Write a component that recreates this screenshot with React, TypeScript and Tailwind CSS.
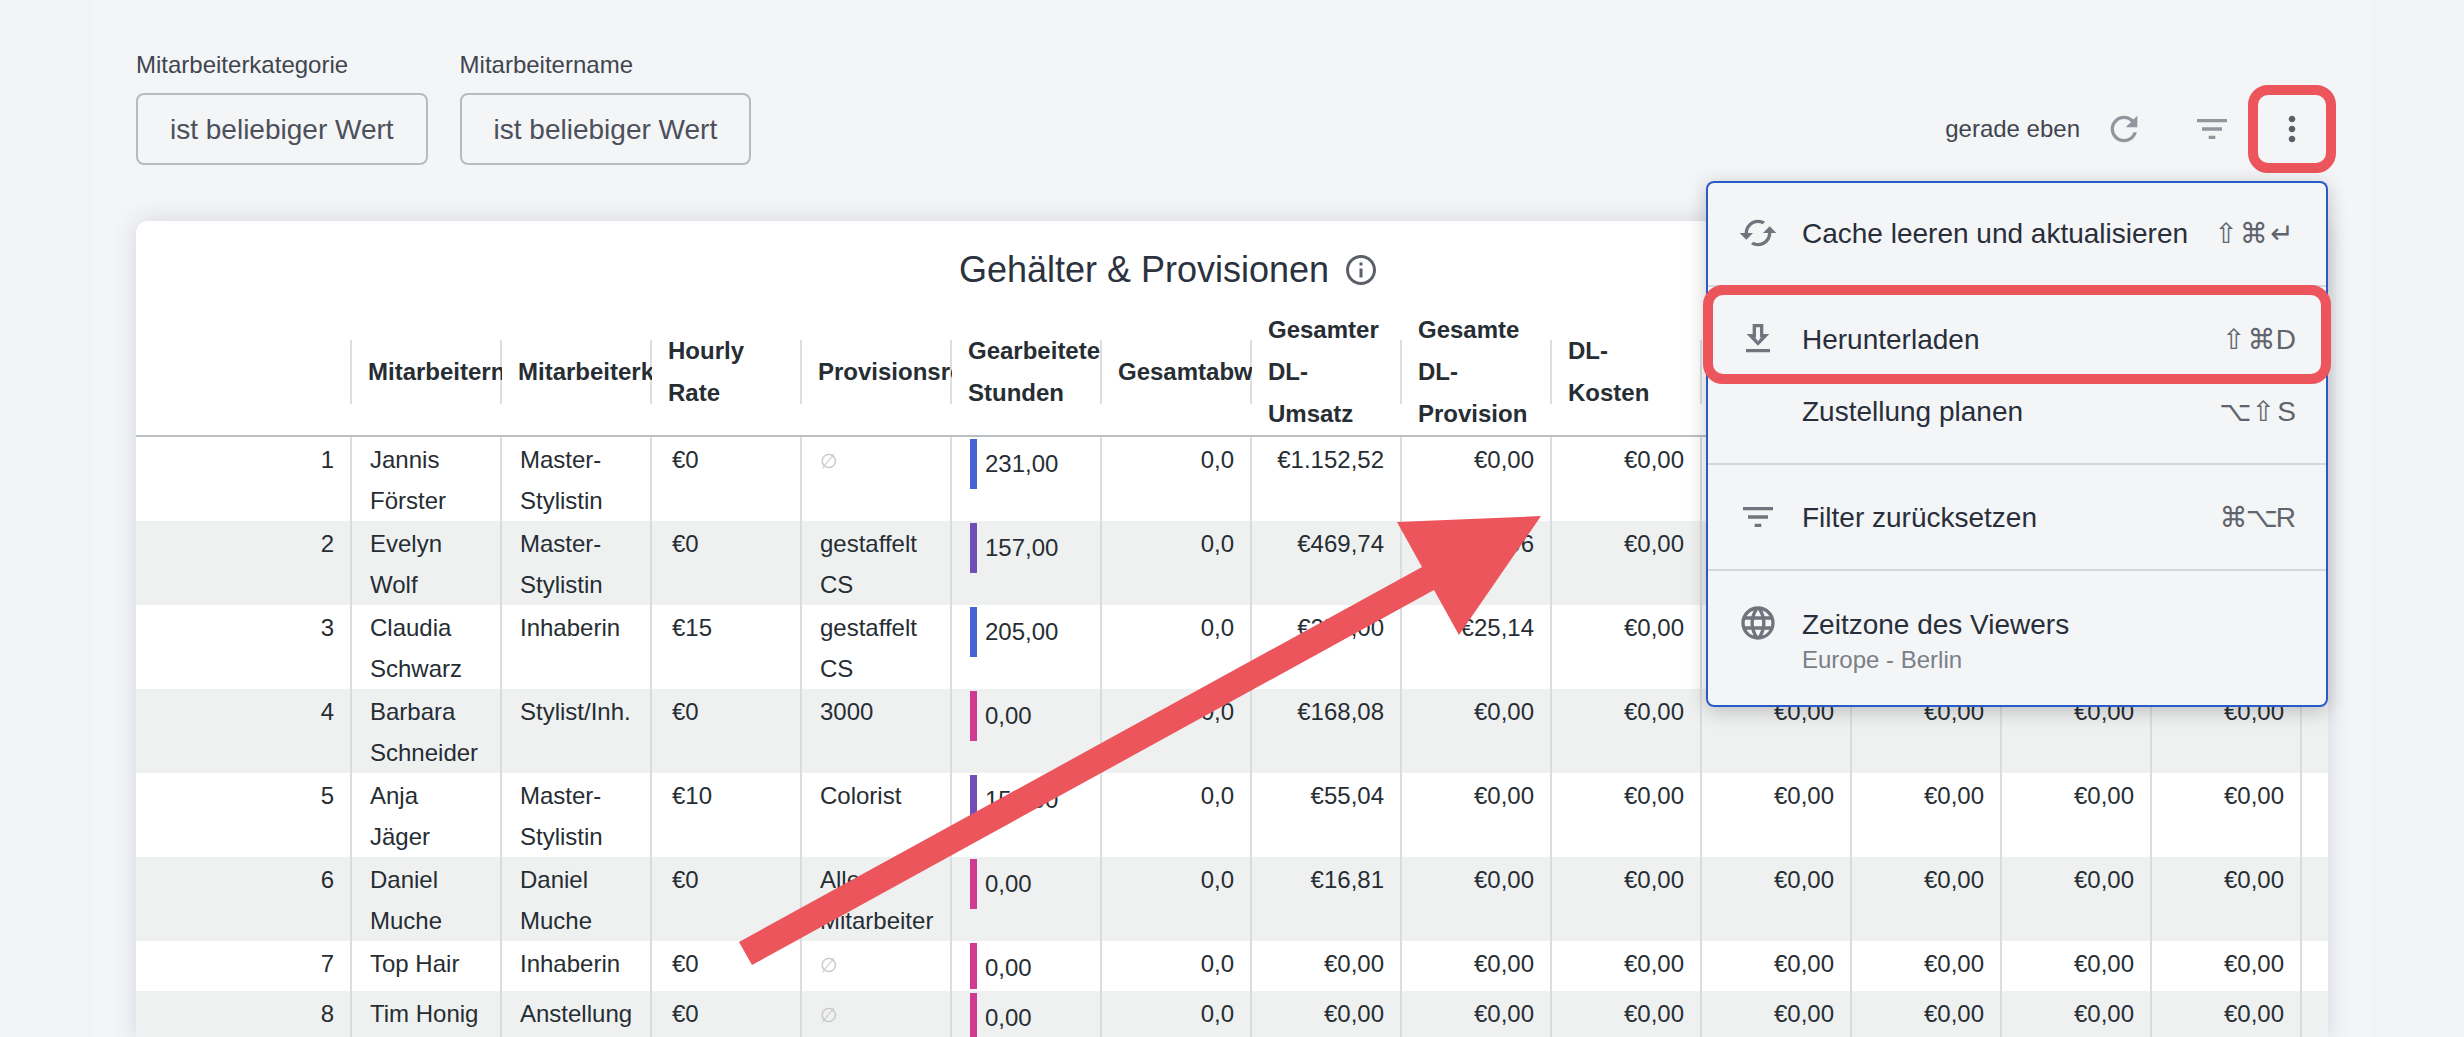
import React from 'react';
import { MdCached, MdFilterList, MdInfoOutline, MdLanguage, MdMoreVert, MdRefresh } from 'react-icons/md';

interface Row {
  name: string;
  category: string;
  rate: string;
  rule: string | null;
  hours: string;
  level: 'high' | 'mid' | 'none';
  revenue: string;
  commission: string;
  compact?: boolean;
}

interface MenuEntry {
  label: string;
  hint?: string;
  keys?: string[];
  icon?: React.ReactNode;
}

const filters = ['Mitarbeiterkategorie', 'Mitarbeitername'];

const columns = [
  'Mitarbeitername',
  'Mitarbeiterkategorie',
  'Hourly Rate',
  'Provisionsregel',
  'Gearbeitete Stunden',
  'Gesamtabwesenheit',
  'Gesamter DL-Umsatz',
  'Gesamte DL-Provision',
  'DL-Kosten',
  'VK-Umsatz',
  'VK-Provision',
  'VK-Kosten',
  'Gesamt',
];

const rows: Row[] = [
  { name: 'Jannis Förster', category: 'Master-Stylistin', rate: '€0', rule: null, hours: '231,00', level: 'high', revenue: '€1.152,52', commission: '€0,00' },
  { name: 'Evelyn Wolf', category: 'Master-Stylistin', rate: '€0', rule: 'gestaffelt CS', hours: '157,00', level: 'mid', revenue: '€469,74', commission: '€14,06' },
  { name: 'Claudia Schwarz', category: 'Inhaberin', rate: '€15', rule: 'gestaffelt CS', hours: '205,00', level: 'high', revenue: '€250,00', commission: '€25,14' },
  { name: 'Barbara Schneider', category: 'Stylist/Inh.', rate: '€0', rule: '3000', hours: '0,00', level: 'none', revenue: '€168,08', commission: '€0,00' },
  { name: 'Anja Jäger', category: 'Master-Stylistin', rate: '€10', rule: 'Colorist', hours: '155,00', level: 'mid', revenue: '€55,04', commission: '€0,00' },
  { name: 'Daniel Muche', category: 'Daniel Muche', rate: '€0', rule: 'Alle Mitarbeiter', hours: '0,00', level: 'none', revenue: '€16,81', commission: '€0,00' },
  { name: 'Top Hair', category: 'Inhaberin', rate: '€0', rule: null, hours: '0,00', level: 'none', revenue: '€0,00', commission: '€0,00', compact: true },
  { name: 'Tim Honig', category: 'Anstellung', rate: '€0', rule: null, hours: '0,00', level: 'none', revenue: '€0,00', commission: '€0,00', compact: true },
];

const barColors = {
  high: 'bg-[#4762d2]',
  mid: 'bg-[#7050b8]',
  none: 'bg-[#d13a91]',
};

const DownloadIcon = () => (
  <svg className="size-10" viewBox="0 0 24 24" fill="currentColor">
    <path d="M18.8 9h-3.6V3H8.8v6H5.2L12 16zm-8-2V5h2.4v6h.6L12 13.4 10.2 11h.6zM4.8 18h14.4v2H4.8z" />
  </svg>
);

const menuGroups: MenuEntry[][] = [
  [{ label: 'Cache leeren und aktualisieren', keys: ['⇧', '⌘', '↵'], icon: <MdCached className="size-10" /> }],
  [
    { label: 'Herunterladen', keys: ['⇧', '⌘', 'D'], icon: <DownloadIcon /> },
    { label: 'Zustellung planen', keys: ['⌥', '⇧', 'S'] },
  ],
  [{ label: 'Filter zurücksetzen', keys: ['⌘', '⌥', 'R'], icon: <MdFilterList className="size-10" /> }],
  [{ label: 'Zeitzone des Viewers', hint: 'Europe - Berlin', icon: <MdLanguage className="size-10" /> }],
];

function Filter({ label }: { label: string }) {
  const id = `filter-${label}`;
  return (
    <div className="flex flex-col gap-3">
      <label htmlFor={id} className="text-[24px] leading-8 text-[#41454f]">{label}</label>
      <button id={id} className="h-[72px] rounded-lg border-2 border-[#b9babd] px-8 pt-[2px] text-[28px] text-[#4c505a]">
        ist beliebiger Wert
      </button>
    </div>
  );
}

function Shortcut({ keys }: { keys: string[] }) {
  return (
    <kbd className="flex pt-[2px] font-['Liberation_Sans','DejaVu_Sans',sans-serif] text-[28px] text-[#60646d]">
      {keys.map((key) => (
        <span key={key} className={/[A-Z]/.test(key) ? '' : 'flex w-7 justify-center'}>{key}</span>
      ))}
    </kbd>
  );
}

function DashboardMenu() {
  return (
    <div role="menu" className="absolute right-0 top-full z-10 w-[622px] rounded-lg bg-[#f4f5f7] shadow-[0_4px_20px_rgba(0,0,0,0.22)] inset-ring-2 inset-ring-[#285bc5]">
      {menuGroups.map((group, i) => (
        <React.Fragment key={i}>
          {i > 0 && <hr className="mx-[2px] border-t-2 border-[#d5d7da]" />}
          <div className="py-4">
            {group.map((entry) => (
              <button
                key={entry.label}
                role="menuitem"
                className={`relative flex w-full px-8 text-left ${entry.hint ? 'h-[104px] items-start pt-4' : 'h-[72px] items-center'}`}
              >
                <span className="mr-6 size-10 shrink-0 text-[#6f747d]">{entry.icon}</span>
                <span className="flex-1 whitespace-nowrap pt-[2px] text-[28px] leading-10 text-[#282e3a]">
                  {entry.label}
                  {entry.hint && <span className="block text-[24px] leading-[30px] text-[#7b7f88]">{entry.hint}</span>}
                </span>
                {entry.keys && <Shortcut keys={entry.keys} />}
                {/* Highlight */}
                {entry.label === 'Herunterladen' && (
                  <span className="pointer-events-none absolute -inset-x-[3px] -bottom-[9px] -top-[18px] rounded-[20px] border-10 border-[#eb555b]" />
                )}
              </button>
            ))}
          </div>
        </React.Fragment>
      ))}
    </div>
  );
}

function SalaryTable() {
  return (
    <table className="w-full table-fixed border-separate border-spacing-0 text-[24px] text-[#262d33]">
      <colgroup>
        <col className="w-[216px]" />
        {columns.map((c) => <col key={c} className="w-[150px]" />)}
        <col />
      </colgroup>
      <thead className="[&_th]:border-b-2 [&_th]:border-[#babfc3] [&_th]:p-0 [&_th]:pt-[6px]">
        <tr className="h-[134px]">
          <th><div className="h-16 shadow-[inset_-2px_0_#dcdee0]" /></th>
          {columns.map((c) => (
            <th key={c} className="text-left font-bold">
              <div className="flex h-16 items-center overflow-x-clip px-4 shadow-[inset_-2px_0_#dcdee0]">
                <span className="min-w-0 leading-[42px]">{c}</span>
              </div>
            </th>
          ))}
          <th />
        </tr>
      </thead>
      <tbody className="leading-[41px] [&_td]:h-[50px] [&_td]:border-r-2 [&_td]:border-[#dadcdd] [&_td]:pt-[2px] [&_td]:align-top [&_td:last-child]:border-r-0">
        {rows.map((row, i) => (
          <tr key={row.name} className="odd:bg-white even:bg-[#eff1f1]">
            <td className="pr-4 text-right">{i + 1}</td>
            <td className="pl-[18px] pr-4">{row.name}</td>
            <td className="pl-[18px] pr-4">{row.category}</td>
            <td className="pl-5 pr-4">{row.rate}</td>
            <td className="pl-[18px] pr-4">{row.rule ?? <span className="text-[20px] text-[#c4c6c8]">∅</span>}</td>
            <td className="pl-[18px]">
              <div className="flex gap-2">
                <span className={`w-[7px] ${row.compact ? 'h-[46px]' : 'h-[50px]'} ${barColors[row.level]}`} />
                <span className="pt-1">{row.hours}</span>
              </div>
            </td>
            <td className="pr-4 text-right">0,0</td>
            <td className="pr-4 text-right">{row.revenue}</td>
            <td className="pr-4 text-right">{row.commission}</td>
            {columns.slice(8).map((c) => (
              <td key={c} className="pr-4 text-right">€0,00</td>
            ))}
            <td />
          </tr>
        ))}
      </tbody>
    </table>
  );
}

export default function App() {
  return (
    <div className="h-screen overflow-hidden bg-[#f2f3f5] px-[92px] font-['Liberation_Sans',Arial,sans-serif]">
      <div className="relative h-full bg-[#f4f5f7] px-11 pt-[49px]">
        <header className="relative flex items-end justify-between pb-4">
          <div className="flex gap-8">
            {filters.map((label) => <Filter key={label} label={label} />)}
          </div>
          <div className="flex h-[72px] items-center text-[#93959d]">
            <span className="mr-6 text-[24px] text-[#41454f]">gerade eben</span>
            <button aria-label="Aktualisieren" className="mr-12"><MdRefresh className="size-10" /></button>
            <button aria-label="Filter"><MdFilterList className="size-10" /></button>
            <button aria-label="Menü" className="-mr-2 ml-4 rounded-[20px] border-10 border-[#eb555b] p-[14px] text-[#5b5f68]">
              <MdMoreVert className="size-10" />
            </button>
          </div>
          <DashboardMenu />
        </header>

        <main className="mt-10 overflow-hidden rounded-t-xl bg-white shadow-[0_0_24px_rgba(60,64,80,0.16)]">
          <div className="flex items-center justify-center gap-[14px] pb-[10px] pr-[126px] pt-[26px]">
            <h1 className="text-[36px] leading-[46px] text-[#2b323e]">Gehälter &amp; Provisionen</h1>
            <MdInfoOutline className="size-9 text-[#5b5f68]" />
          </div>
          <SalaryTable />
        </main>

        {/* Arrow */}
        <svg className="pointer-events-none absolute left-[647px] top-[516px]" width="802" height="450" viewBox="739 516 802 450" fill="#eb555b">
          <path d="M1541 516L1397 522L1422 567L739 942L752 965L1434 590L1459 635z" />
        </svg>
      </div>
    </div>
  );
}
